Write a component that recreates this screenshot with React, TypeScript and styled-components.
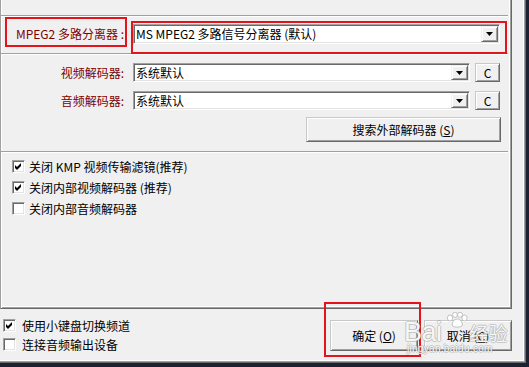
import React from 'react';
import styled, { createGlobalStyle } from 'styled-components';

const GlobalStyle = createGlobalStyle`
  html, body {
    margin: 0;
    padding: 0;
    background: #1c2231;
  }
  body {
    font-family: "Noto Sans CJK SC", "Liberation Sans", sans-serif;
    font-size: 12px;
    line-height: 14px;
    color: #000;
  }
`;

const Window = styled.div`
  position: relative;
  width: 526px;
  height: 363px;
  box-sizing: border-box;
  background: #f0f0f0;
  border-right: 1px solid #696969;
  border-bottom: 1px solid #696969;
  box-shadow: inset -1px -1px 0 #a0a0a0, inset -2px -2px 0 #fff;
  overflow: hidden;
`;

const Panel = styled.div`
  width: 512px;
  height: 309px;
  box-sizing: border-box;
  border-left: 1px solid #a0a0a0;
  border-right: 1px solid #696969;
  border-bottom: 1px solid #696969;
  box-shadow: inset 1px 0 0 #fff, inset -1px -1px 0 #a0a0a0, inset -2px -2px 0 #fff;
  display: flex;
  flex-direction: column;
`;

const TopGap = styled.div`
  height: 15px;
`;

const Etched = styled.div`
  height: 0;
  margin-right: 3px;
  border-top: 1px solid #a0a0a0;
  border-bottom: 1px solid #fff;
`;

const MpegRow = styled.div`
  height: 36px;
  padding-top: 7px;
  box-sizing: border-box;
  display: flex;
  align-items: flex-start;
`;

const Label = styled.div`
  width: 126px;
  height: 19px;
  box-sizing: border-box;
  padding-right: 3px;
  display: flex;
  align-items: center;
  justify-content: flex-end;
  color: #800000;
  white-space: pre;
  flex-shrink: 0;
`;

const DecoderSection = styled.div`
  padding: 8px 10px 9px 0;
  display: flex;
  flex-direction: column;
  gap: 9px;
`;

const DecoderRow = styled.div`
  height: 19px;
  display: flex;
  align-items: stretch;
`;

const SearchRow = styled.div`
  display: flex;
  justify-content: flex-end;
  margin-top: -2px;
`;

const ComboBox = styled.div<{ $w: number; $h: number }>`
  width: ${p => p.$w}px;
  height: ${p => p.$h}px;
  margin-left: 6px;
  box-sizing: border-box;
  display: flex;
  align-items: stretch;
  background: #fff;
  border-top: 1px solid #a0a0a0;
  border-left: 1px solid #a0a0a0;
  border-right: 1px solid #fff;
  border-bottom: 1px solid #fff;
  box-shadow: inset 1px 1px 0 #696969, inset -1px -1px 0 #e3e3e3;
  padding: 1px;
  flex-shrink: 0;
`;

const ComboText = styled.div`
  flex: 1;
  display: flex;
  align-items: center;
  padding-left: 1px;
  white-space: pre;
`;

const DropButton = styled.div`
  width: 17px;
  box-sizing: border-box;
  background: #f0f0f0;
  border-top: 1px solid #f0f0f0;
  border-left: 1px solid #f0f0f0;
  border-right: 1px solid #696969;
  border-bottom: 1px solid #696969;
  box-shadow: inset 1px 1px 0 #fff, inset -1px -1px 0 #a0a0a0;
  display: flex;
  align-items: center;
  justify-content: center;
`;

const PushButton = styled.div<{ $w: number; $h: number; $ml?: number }>`
  width: ${p => p.$w}px;
  height: ${p => p.$h}px;
  margin-left: ${p => p.$ml ?? 0}px;
  box-sizing: border-box;
  background: #f0f0f0;
  border: 1px solid;
  border-color: #c8c8c8 #696969 #696969 #c8c8c8;
  box-shadow: inset 1px 1px 0 #fff, inset -1px -1px 0 #a0a0a0;
  display: flex;
  align-items: center;
  justify-content: center;
  white-space: pre;
  flex-shrink: 0;
`;

const CheckSection = styled.div`
  padding: 3px 0 0 11px;
  display: flex;
  flex-direction: column;
`;

const CheckRow = styled.div<{ $h: number; $gap: number }>`
  height: ${p => p.$h}px;
  display: flex;
  align-items: center;
  gap: ${p => p.$gap}px;
  white-space: pre;
`;

const CheckBoxFrame = styled.div`
  width: 13px;
  height: 13px;
  box-sizing: border-box;
  background: #fff;
  border-top: 1px solid #a0a0a0;
  border-left: 1px solid #a0a0a0;
  border-right: 1px solid #fff;
  border-bottom: 1px solid #fff;
  box-shadow: inset 1px 1px 0 #696969, inset -1px -1px 0 #e3e3e3;
  display: flex;
  align-items: center;
  justify-content: center;
  flex-shrink: 0;
`;

const Footer = styled.div`
  display: flex;
  align-items: flex-start;
  padding: 7px 13px 0 3px;
`;

const FooterChecks = styled.div`
  display: flex;
  flex-direction: column;
`;

const FooterButtons = styled.div`
  margin-left: auto;
  padding-top: 4px;
  display: flex;
  gap: 6px;
`;

const Mark = styled.div<{ $x: number; $y: number; $w: number; $h: number }>`
  position: absolute;
  left: ${p => p.$x}px;
  top: ${p => p.$y}px;
  width: ${p => p.$w}px;
  height: ${p => p.$h}px;
  box-sizing: border-box;
  border: 2px solid #e3141c;
  pointer-events: none;
`;

const outline = 'rgba(150, 150, 150, 0.45)';

const Watermark = styled.div`
  position: absolute;
  left: 404px;
  top: 311px;
  width: 104px;
  height: 44px;
  display: flex;
  flex-direction: column;
  color: rgba(255, 255, 255, 0.92);
  text-shadow: 1px 0 0 ${outline}, -1px 0 0 ${outline}, 0 1px 0 ${outline}, 0 -1px 0 ${outline};
  pointer-events: none;
`;

const MarkTop = styled.div`
  height: 33px;
  display: flex;
  align-items: flex-start;
`;

const MarkBai = styled.span`
  font-family: "Liberation Sans", Arial, sans-serif;
  font-size: 27px;
  line-height: 24px;
  margin-top: 9px;
  letter-spacing: -0.5px;
`;

const MarkJy = styled.span`
  font-family: "Noto Sans CJK SC", sans-serif;
  font-size: 19px;
  line-height: 20px;
  margin-top: 12px;
`;

const MarkUrl = styled.span`
  font-family: "Liberation Sans", Arial, sans-serif;
  font-size: 10px;
  line-height: 10px;
  margin-left: 3px;
  letter-spacing: 0.3px;
`;

const Arrow = () => (
  <svg width="7" height="4" viewBox="0 0 7 4">
    <polygon points="0,0 7,0 3.5,4" fill="#000" />
  </svg>
);

const Check = ({ on }: { on?: boolean }) => (
  <CheckBoxFrame>
    {on && (
      <svg width="9" height="9" viewBox="0 0 9 9">
        <polygon points="1,3 3,5 7,1 7,4 3,8 1,6" fill="#000" />
      </svg>
    )}
  </CheckBoxFrame>
);

const Paw = () => (
  <svg width="26" height="16" viewBox="0 0 26 16" style={{ marginTop: 1, marginLeft: 2 }}>
    <g fill="rgba(255,255,255,0.95)" stroke="rgba(140,140,140,0.55)" strokeWidth="0.9">
      <ellipse cx="6" cy="6" rx="2.6" ry="3" />
      <ellipse cx="11" cy="2.8" rx="2.4" ry="2.6" />
      <ellipse cx="16" cy="2.8" rx="2.4" ry="2.6" />
      <ellipse cx="20.5" cy="6" rx="2.6" ry="3" />
      <path d="M13.3 7 C9 7 7.5 12 8.5 14 C10 15.5 16.5 15.5 18 14 C19 12 17.5 7 13.3 7 Z" />
    </g>
  </svg>
);

const Combo = ({ w, h, text }: { w: number; h: number; text: string }) => (
  <ComboBox $w={w} $h={h}>
    <ComboText>{text}</ComboText>
    <DropButton>
      <Arrow />
    </DropButton>
  </ComboBox>
);

const App = () => {
  const decoders = [
    { label: '视频解码器:', value: '系统默认' },
    { label: '音频解码器:', value: '系统默认' },
  ];
  const panelChecks = [
    { text: '关闭 KMP 视频传输滤镜(推荐)', on: true },
    { text: '关闭内部视频解码器 (推荐)', on: true },
    { text: '关闭内部音频解码器', on: false },
  ];
  return (
    <>
      <GlobalStyle />
      <Window>
        <Panel>
          <TopGap />
          <Etched />
          <MpegRow>
            <Label>MPEG2 多路分离器 :</Label>
            <Combo w={367} h={20} text="MS MPEG2 多路信号分离器 (默认)" />
          </MpegRow>
          <Etched />
          <DecoderSection>
            {decoders.map(d => (
              <DecoderRow key={d.label}>
                <Label>{d.label}</Label>
                <Combo w={337} h={19} text={d.value} />
                <PushButton $w={25} $h={19} $ml={5}>C</PushButton>
              </DecoderRow>
            ))}
            <SearchRow>
              <PushButton $w={195} $h={25}>
                搜索外部解码器 (<u>S</u>)
              </PushButton>
            </SearchRow>
          </DecoderSection>
          <Etched />
          <CheckSection>
            {panelChecks.map(c => (
              <CheckRow key={c.text} $h={21} $gap={4}>
                <Check on={c.on} />
                {c.text}
              </CheckRow>
            ))}
          </CheckSection>
        </Panel>
        <Footer>
          <FooterChecks>
            <CheckRow $h={19} $gap={6}>
              <Check on />
              使用小键盘切换频道
            </CheckRow>
            <CheckRow $h={19} $gap={6}>
              <Check />
              连接音频输出设备
            </CheckRow>
          </FooterChecks>
          <FooterButtons>
            <PushButton $w={88} $h={31}>
              确定 (<u>O</u>)
            </PushButton>
            <PushButton $w={88} $h={31}>
              取消 (<u>C</u>)
            </PushButton>
          </FooterButtons>
        </Footer>
        <Mark $x={5} $y={17} $w={122} $h={30} />
        <Mark $x={131} $y={21} $w={376} $h={33} />
        <Mark $x={324} $y={302} $w={97} $h={55} />
        <Watermark>
          <MarkTop>
            <MarkBai>Bai</MarkBai>
            <Paw />
            <MarkJy>经验</MarkJy>
          </MarkTop>
          <MarkUrl>jingyan.baidu.com</MarkUrl>
        </Watermark>
      </Window>
    </>
  );
};

export default App;
